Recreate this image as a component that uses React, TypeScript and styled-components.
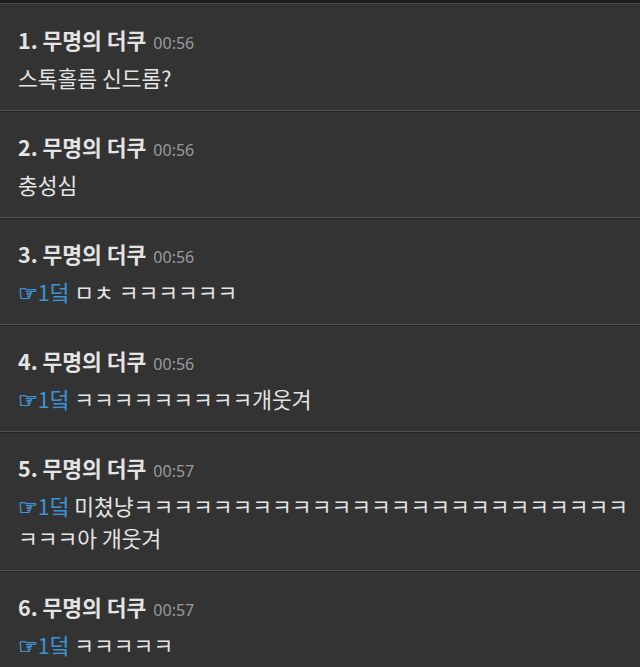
import styled, {createGlobalStyle} from 'styled-components';

const GlobalStyle = createGlobalStyle`
  html, body {
    margin: 0;
    padding: 0;
    background: #333333;
  }
  body {
    font-family: "Noto Sans CJK KR", "Noto Sans", sans-serif;
    color: #e6e6e6;
  }
`;

type Comment = {
    no: number;
    time: string;
    reply?: string;
    text: string;
};

const comments: Comment[] = [
    {no: 1, time: '00:56', text: '스톡홀름 신드롬?'},
    {no: 2, time: '00:56', text: '충성심'},
    {no: 3, time: '00:56', reply: '1덬', text: 'ㅁㅊ ㅋㅋㅋㅋㅋㅋ'},
    {no: 4, time: '00:56', reply: '1덬', text: 'ㅋㅋㅋㅋㅋㅋㅋㅋㅋ개웃겨'},
    {
        no: 5,
        time: '00:57',
        reply: '1덬',
        text: '미쳤냥ㅋㅋㅋㅋㅋㅋㅋㅋㅋㅋㅋㅋㅋㅋㅋㅋㅋㅋㅋㅋㅋㅋㅋㅋㅋㅋㅋㅋ아 개웃겨',
    },
    {no: 6, time: '00:57', reply: '1덬', text: 'ㅋㅋㅋㅋㅋ'},
];

const App = () => {
    return (
        <>
            <GlobalStyle/>
            <Page>
                <TopEdge/>
                <CommentList>
                    {comments.map((c) => (
                        <CommentItem key={c.no}>
                            <CommentHeader>
                                <Author>{c.no}. 무명의 더쿠</Author>
                                <Time>{c.time}</Time>
                            </CommentHeader>
                            <CommentBody>
                                {c.reply && (
                                    <ReplyTag>
                                        <Hand>☞</Hand>{c.reply}
                                    </ReplyTag>
                                )}
                                {c.reply ? ' ' : ''}{c.text}
                            </CommentBody>
                        </CommentItem>
                    ))}
                </CommentList>
            </Page>
        </>
    );
};

export default App;

const Page = styled.div`
  width: 640px;
  min-height: 667px;
  background: #333333;
  overflow: hidden;
`;

const TopEdge = styled.div`
  height: 3px;
  background: #1d1d1d;
  border-bottom: 1px solid #4a4a4a;
`;

const CommentList = styled.ul`
  list-style: none;
  margin: 0;
  padding: 0;
`;

const CommentItem = styled.li`
  padding: 21px 10px 16px 18px;
  border-bottom: 1px solid #505050;
  box-shadow: 0 1px 0 #262626;
`;

const CommentHeader = styled.div`
  display: flex;
  flex-flow: row nowrap;
  align-items: baseline;
  gap: 7px;
  height: 30px;
  line-height: 30px;
`;

const Author = styled.span`
  font-size: 21.5px;
  font-weight: bold;
  color: #e4e4e4;
`;

const Time = styled.span`
  font-family: "Noto Sans", "Noto Sans CJK KR", sans-serif;
  font-size: 16px;
  color: #9a9a9a;
`;

const CommentBody = styled.p`
  margin: 7px 0 0 0;
  font-size: 21.5px;
  line-height: 32px;
  color: #e4e4e4;
  word-break: break-all;
`;

const ReplyTag = styled.span`
  color: #3d93d4;
`;

const Hand = styled.span`
  font-family: "DejaVu Sans", sans-serif;
  font-size: 22px;
  line-height: 1;
  -webkit-text-stroke: 0.7px #3d93d4;
`;
